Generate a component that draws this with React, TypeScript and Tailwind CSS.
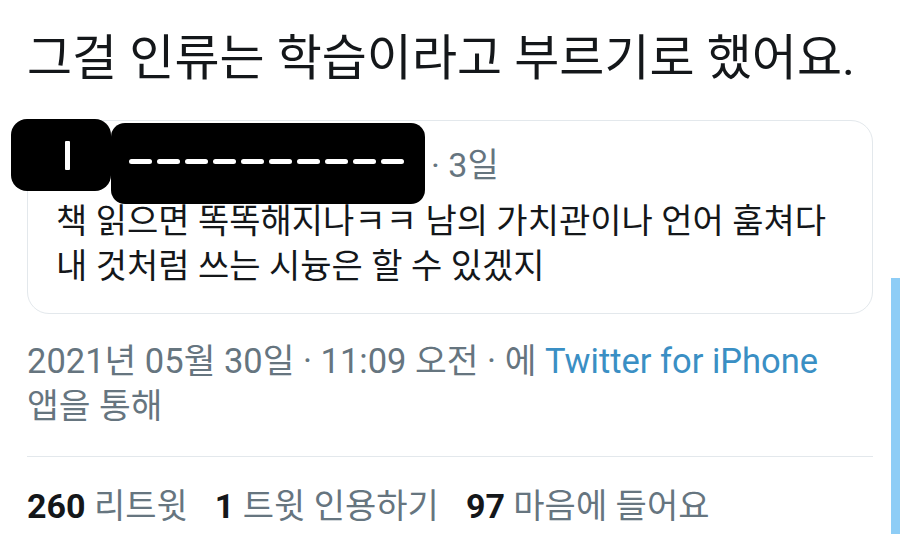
export default function App() {
  const dashes = Array.from({ length: 10 })

  return (
    <div className="relative w-[900px] h-[534px] overflow-hidden bg-white font-['Roboto','Noto_Sans_CJK_KR',sans-serif] text-[#14171a]">
      <div className="px-[27px]">
        <h1 className="pt-[29px] text-[49px] leading-[60px] font-normal">
          그걸 인류는 학습이라고 부르기로 했어요.
        </h1>

        <div className="relative mt-[31px] rounded-[22px] border border-[#e3e8ec] pt-[22px] pb-[24px] pl-[28px] pr-[10px]">
          {/* redacted avatar + name */}
          <div className="absolute left-[-17px] top-[-2px] flex h-[72px] w-[100px] items-center rounded-[16px] bg-black">
            <div className="ml-[54px] h-[29px] w-[5px] rounded-[1px] bg-white" />
          </div>
          <div className="absolute left-[83px] top-[2px] flex h-[81px] w-[314px] items-center gap-[5px] rounded-[14px] bg-black pl-[18px]">
            {dashes.map((_, i) => (
              <div key={i} className="mt-[-4px] h-[5px] w-[23px] rounded-full bg-white" />
            ))}
          </div>

          <div className="flex h-[45px] items-center pl-[375px] text-[34px] leading-[45px] text-[#66757f]">
            · 3일
          </div>
          <p className="mt-[11px] text-[34px] leading-[45px] whitespace-nowrap">
            책 읽으면 똑똑해지나ㅋㅋ 남의 가치관이나 언어 훔쳐다
            <br />
            내 것처럼 쓰는 시늉은 할 수 있겠지
          </p>
        </div>

        <p className="mt-[25px] text-[34.5px] leading-[45px] text-[#66757f] whitespace-nowrap">
          2021년 05월 30일 · 11:09 오전 · 에 <span className="text-[#3a8fc4]">Twitter for iPhone</span>
          <br />
          앱을 통해
        </p>

        <div className="mt-[27px] h-px bg-[#e3e8ec]" />

        <div className="mt-[27px] flex gap-[27px] text-[34px] leading-[45px] text-[#66757f] whitespace-nowrap">
          <span>
            <b className="font-bold text-[#14171a]">260</b> 리트윗
          </span>
          <span>
            <b className="font-bold text-[#14171a]">1</b> 트윗 인용하기
          </span>
          <span>
            <b className="font-bold text-[#14171a]">97</b> 마음에 들어요
          </span>
        </div>
      </div>

      {/* scroll indicator */}
      <div className="absolute right-0 top-[278px] h-[256px] w-[9px] bg-[#8ecdf6]" />
    </div>
  )
}
